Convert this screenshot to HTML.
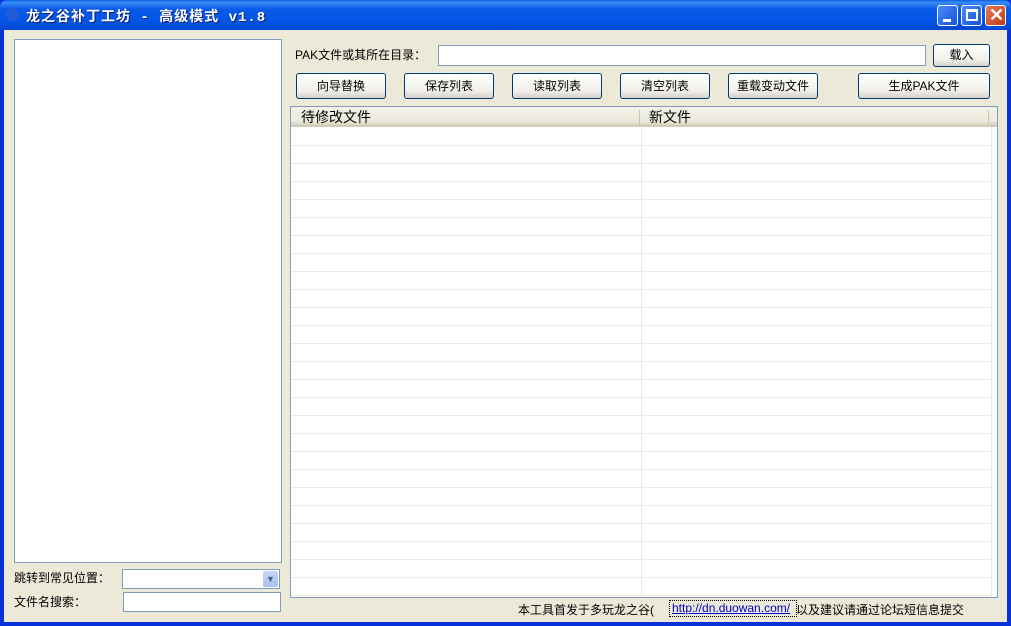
<!DOCTYPE html>
<html><head><meta charset="utf-8"><style>
*{box-sizing:border-box;margin:0;padding:0}
body{width:1011px;height:626px;overflow:hidden;background:#0831d9;font-family:"Liberation Sans","Noto Sans CJK SC","WenQuanYi Zen Hei",sans-serif;font-size:12px;color:#000;position:relative}
.title{position:absolute;left:0;top:0;width:1011px;height:30px;border-radius:7px 7px 0 0;background:linear-gradient(#0a5fe0 0%,#3a8cf6 8%,#0a5ae6 30%,#0455e6 70%,#0046d0 100%)}
.title .t{position:absolute;left:26px;top:6px;color:#fff;font-weight:bold;font-size:14px;letter-spacing:1px;text-shadow:1px 1px #0a2070;font-family:"Liberation Mono","Noto Sans CJK SC",monospace}
.ico{position:absolute;left:6px;top:8px;width:13px;height:13px;border-radius:50%;background:#2a5fd0;opacity:.7}
.wb{position:absolute;top:5px;width:21px;height:21px;border:1px solid #fff;border-radius:3px;background:linear-gradient(135deg,#4b8cf8,#1552d8)}
.wb.x{background:linear-gradient(135deg,#e47a5c,#c23a12)}
.client{position:absolute;left:4px;top:30px;width:1003px;height:592px;background:#ece9d8}
.box{position:absolute;background:#fff;border:1px solid #7f9db9}
.btn{position:absolute;height:26px;border:1px solid #003c74;border-radius:3px;background:linear-gradient(#fff,#f0f0ea 70%,#d6d0c5);text-align:center;line-height:24px;font-size:12px}
.lbl{position:absolute;font-size:12px}
.lv{position:absolute;left:286px;top:76px;width:708px;height:492px;border:1px solid #7f9db9;background:#fff;overflow:hidden}
.hdr{position:absolute;left:0;top:0;width:706px;height:20px;background:linear-gradient(#f3f2ea,#ebeadb 80%,#d6d3c0);border-bottom:2px solid #d0cdbb}
.hdr span{position:absolute;top:0px;font-size:14px}
.rows{position:absolute;left:0;top:21px;width:700px;height:470px;background:repeating-linear-gradient(#fff 0 17px,#ecebe0 17px 18px)}
</style></head><body>
<div class="title"><div class="ico"></div><div class="t">龙之谷补丁工坊 - 高级模式 v1.8</div>
<div class="wb" style="left:937px"><div style="position:absolute;left:5px;top:13px;width:8px;height:3px;background:#fff"></div></div>
<div class="wb" style="left:961px"><div style="position:absolute;left:4px;top:3px;width:12px;height:12px;border:2px solid #fff;border-top-width:3px"></div></div>
<div class="wb x" style="left:985px"><div style="position:absolute;left:1px;top:-2px;width:19px;text-align:center;color:#fff;font-weight:bold;font-size:18px;line-height:22px">✕</div></div>
</div>
<div class="client">
<div class="box" style="left:10px;top:9px;width:268px;height:524px"></div>
<div class="lbl" style="left:10px;top:539px">跳转到常见位置：</div>
<div class="box" style="left:118px;top:539px;width:158px;height:20px"><div style="position:absolute;right:1px;top:1px;width:15px;height:16px;background:linear-gradient(#c6d6fb,#a8c0f2);border-radius:2px;color:#4d6185;font-size:9px;text-align:center;line-height:16px">▼</div></div>
<div class="lbl" style="left:10px;top:563px">文件名搜索：</div>
<div class="box" style="left:119px;top:562px;width:158px;height:20px"></div>
<div class="lbl" style="left:291px;top:16px">PAK文件或其所在目录：</div>
<div class="box" style="left:434px;top:15px;width:488px;height:21px"></div>
<div class="btn" style="left:929px;top:14px;width:57px;height:23px;line-height:21px">载入</div>
<div class="btn" style="left:292px;top:43px;width:90px">向导替换</div>
<div class="btn" style="left:400px;top:43px;width:90px">保存列表</div>
<div class="btn" style="left:508px;top:43px;width:90px">读取列表</div>
<div class="btn" style="left:616px;top:43px;width:90px">清空列表</div>
<div class="btn" style="left:724px;top:43px;width:90px">重载变动文件</div>
<div class="btn" style="left:854px;top:43px;width:132px">生成PAK文件</div>
<div class="lv"><div class="rows"></div>
<div style="position:absolute;left:350px;top:20px;width:1px;height:470px;background:#ecebe0"></div>
<div style="position:absolute;left:700px;top:0;width:1px;height:490px;background:#ecebe0"></div>
<div class="hdr"><span style="left:10px">待修改文件</span><div style="position:absolute;left:348px;top:3px;width:1px;height:14px;background:#c7c5b2"></div><span style="left:358px">新文件</span><div style="position:absolute;left:697px;top:3px;width:1px;height:14px;background:#c7c5b2"></div></div>
</div>
<div class="lbl" style="left:514px;top:571px">本工具首发于多玩龙之谷(</div>
<div class="lbl" style="left:792px;top:571px">以及建议请通过论坛短信息提交</div>
<div class="lbl" style="left:665px;top:570px;width:128px;border:1px dotted #000;padding:0 2px;color:#00c;text-decoration:underline;height:17px;line-height:15px;background:#ece9d8;z-index:2">http://dn.duowan.com/</div>
</div>
</body></html>
